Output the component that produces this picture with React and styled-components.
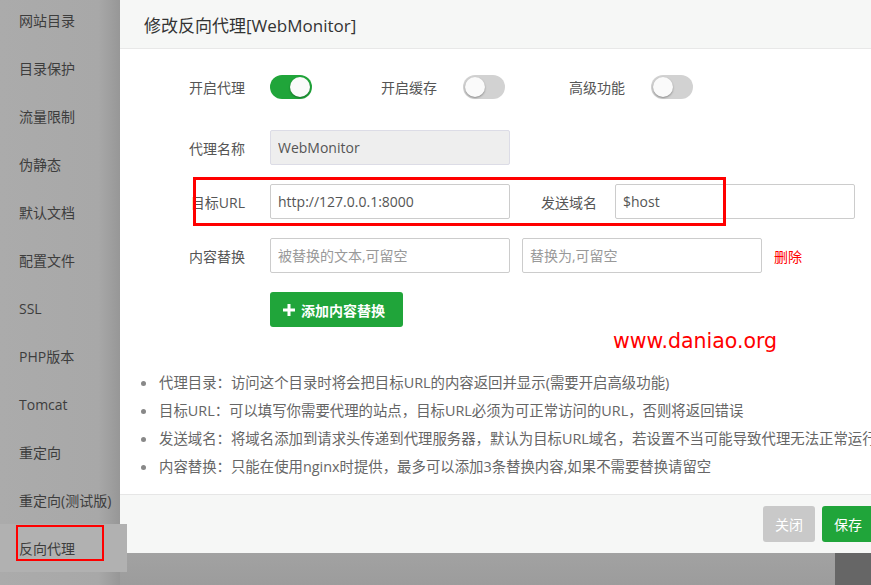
import React from 'react';
import styled, { createGlobalStyle } from 'styled-components';

const GlobalStyle = createGlobalStyle`
  html, body {
    margin: 0;
    padding: 0;
    overflow: hidden;
    background: #a4a4a4;
    font-family: "Open Sans", "Noto Sans CJK SC", sans-serif;
  }
  * { box-sizing: border-box; }
`;

const Page = styled.div`
  display: flex;
  width: 871px;
  height: 585px;
  overflow: hidden;
`;

const Sidebar = styled.div`
  width: 120px;
  flex-shrink: 0;
  background: linear-gradient(90deg, #ababab 0%, #a8a8a8 82%, #979797 100%);
`;

const MenuList = styled.div`
  margin-top: -4px;
`;

const MenuItem = styled.div`
  position: relative;
  height: 48px;
  display: flex;
  align-items: center;
  padding-left: 19px;
  font-size: 14px;
  color: #3d3d3d;
  background: ${p => (p.$active ? '#b1b1b1' : 'transparent')};
  margin-right: ${p => (p.$active ? '-7px' : '0')};
`;

const MarkBox = styled.div`
  position: absolute;
  left: 16px;
  top: 1px;
  width: 88px;
  height: 36px;
  border: 2px solid #f00;
`;

const Main = styled.div`
  flex: 1;
  display: flex;
  flex-direction: column;
  overflow: hidden;
`;

const Modal = styled.div`
  width: 764px;
  flex-shrink: 0;
  background: #fff;
`;

const Header = styled.div`
  height: 49px;
  display: flex;
  align-items: center;
  padding-left: 24px;
  background: #f6f7f6;
  border-bottom: 1px solid #e8e8e8;
  font-size: 17px;
  color: #333;
`;

const Body = styled.div`
  position: relative;
  padding: 20px 0 13px 10px;
  height: 445px;
`;

const Row = styled.div`
  display: flex;
  align-items: center;
  height: 35px;
  margin-bottom: ${p => p.$mb ?? 19}px;
`;

const Label = styled.div`
  width: ${p => p.$w ?? 115}px;
  margin-right: ${p => p.$gap ?? 25}px;
  text-align: right;
  font-size: 14px;
  color: #555;
  flex-shrink: 0;
`;

const Switch = styled.div`
  position: relative;
  width: 42px;
  height: 24px;
  border-radius: 12px;
  background: ${p => (p.$on ? '#20a53a' : '#d2d2d2')};
  flex-shrink: 0;

  &::after {
    content: '';
    position: absolute;
    top: 2px;
    left: ${p => (p.$on ? '20px' : '2px')};
    width: 20px;
    height: 20px;
    border-radius: 50%;
    background: #fafafa;
    box-shadow: 0 1px 2px rgba(0, 0, 0, 0.35);
  }
`;

const Input = styled.input`
  width: 240px;
  height: 35px;
  padding: 0 7px;
  border: 1px solid ${p => (p.readOnly ? '#dcdce6' : '#ccc')};
  border-radius: 2px;
  background: ${p => (p.readOnly ? '#eeeeee' : '#fff')};
  font-family: "Open Sans", "Noto Sans CJK SC", sans-serif;
  font-size: 14px;
  color: #555;
  margin-left: ${p => p.$ml ?? 0}px;
  outline: none;

  &::placeholder {
    color: #999;
  }
`;

const DeleteLink = styled.span`
  margin-left: 12px;
  font-size: 14px;
  color: #f00;
`;

const AddButton = styled.button`
  margin-left: 140px;
  height: 35px;
  width: 133px;
  display: flex;
  align-items: center;
  gap: 6px;
  padding: 0 0 0 13px;
  border: none;
  border-radius: 3px;
  background: #20a53a;
  color: #fff;
  font-family: "Open Sans", "Noto Sans CJK SC", sans-serif;
  font-size: 14px;
  font-weight: 600;
`;

const TipList = styled.ul`
  list-style: none;
  margin: 42px 0 0 0;
  padding: 0 0 0 10px;
`;

const Tip = styled.li`
  position: relative;
  height: 28px;
  line-height: 28px;
  padding-left: 19px;
  font-size: 14.4px;
  color: #666;
  white-space: nowrap;

  &::before {
    content: '';
    position: absolute;
    left: 1px;
    top: 12px;
    width: 5px;
    height: 5px;
    border-radius: 50%;
    background: #888;
  }
`;

const UrlMark = styled.div`
  position: absolute;
  left: 73px;
  top: 128px;
  width: 533px;
  height: 49px;
  border: 3px solid #f00;
  pointer-events: none;
`;

const Watermark = styled.div`
  position: absolute;
  left: 493px;
  top: 280px;
  font-family: "DejaVu Sans", Verdana, sans-serif;
  font-size: 20.5px;
  color: #f00;
`;

const Footer = styled.div`
  height: 59px;
  display: flex;
  justify-content: flex-end;
  gap: 7px;
  padding: 11px 10px 0 0;
  background: #f6f7f6;
  border-top: 1px solid #e6e6e6;
`;

const FooterButton = styled.button`
  width: 52px;
  height: 36px;
  border: none;
  border-radius: 3px;
  background: ${p => (p.$primary ? '#20a53a' : '#c9c9c9')};
  color: #fff;
  font-family: "Open Sans", "Noto Sans CJK SC", sans-serif;
  font-size: 14px;
`;

const Backdrop = styled.div`
  flex: 1;
  display: flex;
`;

const Shade = styled.div`
  flex: 1;
  background: linear-gradient(180deg, #a2a2a2 0%, #9c9c9c 100%);
`;

const DarkEdge = styled.div`
  width: 36px;
  background: #666;
`;

const PlusIcon = () => (
  <svg width="12" height="12" viewBox="0 0 12 12">
    <rect x="4.5" y="0" width="3" height="12" fill="#fff" />
    <rect x="0" y="4.5" width="12" height="3" fill="#fff" />
  </svg>
);

const menu = [
  '网站目录', '目录保护', '流量限制', '伪静态', '默认文档', '配置文件',
  'SSL', 'PHP版本', 'Tomcat', '重定向', '重定向(测试版)', '反向代理',
];

const tips = [
  '代理目录：访问这个目录时将会把目标URL的内容返回并显示(需要开启高级功能)',
  '目标URL：可以填写你需要代理的站点，目标URL必须为可正常访问的URL，否则将返回错误',
  '发送域名：将域名添加到请求头传递到代理服务器，默认为目标URL域名，若设置不当可能导致代理无法正常运行',
  '内容替换：只能在使用nginx时提供，最多可以添加3条替换内容,如果不需要替换请留空',
];

const App = () => {
  return (
    <Page>
      <GlobalStyle />
      <Sidebar>
        <MenuList>
          {menu.map(item => (
            <MenuItem key={item} $active={item === '反向代理'}>
              {item}
              {item === '反向代理' && <MarkBox />}
            </MenuItem>
          ))}
        </MenuList>
      </Sidebar>
      <Main>
        <Modal>
          <Header>修改反向代理[WebMonitor]</Header>
          <Body>
            <Row $mb={26}>
              <Label>开启代理</Label>
              <Switch $on />
              <Label $w={125} $gap={26}>开启缓存</Label>
              <Switch />
              <Label $w={120} $gap={26}>高级功能</Label>
              <Switch />
            </Row>
            <Row>
              <Label>代理名称</Label>
              <Input readOnly defaultValue="WebMonitor" />
            </Row>
            <Row>
              <Label>目标URL</Label>
              <Input defaultValue="http://127.0.0.1:8000" />
              <Label $w={87} $gap={18}>发送域名</Label>
              <Input defaultValue="$host" />
            </Row>
            <Row>
              <Label>内容替换</Label>
              <Input placeholder="被替换的文本,可留空" />
              <Input $ml={12} placeholder="替换为,可留空" />
              <DeleteLink>删除</DeleteLink>
            </Row>
            <AddButton>
              <PlusIcon />
              添加内容替换
            </AddButton>
            <TipList>
              {tips.map(t => (
                <Tip key={t}>{t}</Tip>
              ))}
            </TipList>
            <UrlMark />
            <Watermark>www.daniao.org</Watermark>
          </Body>
          <Footer>
            <FooterButton>关闭</FooterButton>
            <FooterButton $primary>保存</FooterButton>
          </Footer>
        </Modal>
        <Backdrop>
          <Shade />
          <DarkEdge />
        </Backdrop>
      </Main>
    </Page>
  );
};

export default App;
